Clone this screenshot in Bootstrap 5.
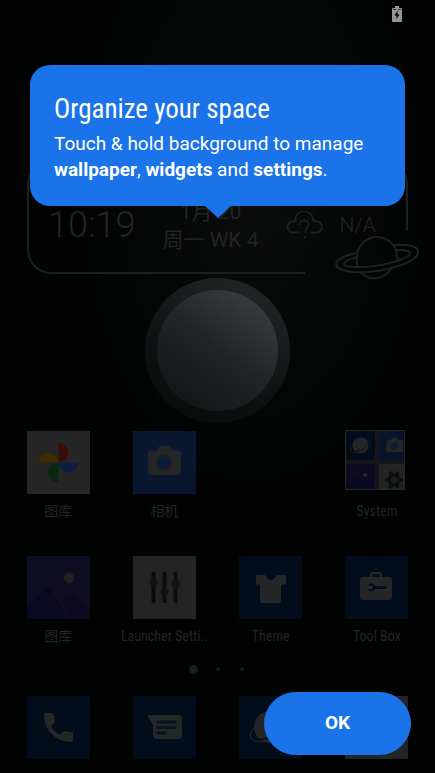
<!DOCTYPE html>
<html lang="en">
<head>
<meta charset="utf-8">
<meta name="viewport" content="width=device-width, initial-scale=1">
<title>Home</title>
<link href="https://cdn.jsdelivr.net/npm/bootstrap@5.3.0/dist/css/bootstrap.min.css" rel="stylesheet">
<style>
:root { --accent: #1a73e8; --dim: #242526; --navy: #020d1c; }
body { background: #010202; color: #232425; font-family: Roboto, "Noto Sans CJK SC", sans-serif; }
.home { min-height: 100vh; background: radial-gradient(ellipse 190px 330px at 58% 190px, #0b0d0d 0, #050606 55%, #010202 100%); overflow: hidden; }
.status { height: 28px; padding: 6px 33px 0 0; }
.clock-widget { margin: 132px 27px 0; height: 114px; padding: 41px 32px 0 21px; }
.clock-widget::before, .clock-widget::after { content: ""; position: absolute; top: 0; border: 2px solid #1e1f20; }
.clock-widget::before { left: 0; right: 103px; bottom: 0; border-width: 0 0 2px 2px; border-radius: 24px 0 0 24px; }
.clock-widget::after { right: 0; width: 30px; bottom: 44px; border-width: 2px 2px 0 0; border-top-right-radius: 24px; }
.time { font-size: 36px; font-weight: 300; line-height: 48px; }
.date { font-size: 21px; line-height: 28px; margin-top: -3px; }
.weather { font-size: 21px; font-weight: 300; line-height: 48px; }
.planet { right: -11px; bottom: -6px; }
.orb { width: 145px; height: 145px; padding: 12px; margin-top: 4px; background: linear-gradient(205deg, #242627 5%, #111213 55%, #090a0a 95%); }
.orb-core { background: linear-gradient(215deg, #373c40 12%, #202426 50%, #131617 90%); }
.apps { padding: 0 5px; }
.first-row { margin-top: 8px; }
.next-row { margin-top: 35px; }
.app { color: #232425; font-family: "Roboto Condensed", Roboto, "Noto Sans CJK SC", sans-serif; font-size: 14px; line-height: 20px; }
.app:hover { color: #333; }
.app svg { overflow: visible; }
.app-name { margin-top: 7px; white-space: nowrap; }
.pager { height: 10px; gap: 20px; margin: 18px 0 22px; }
.dot { width: 4px; height: 4px; background: #1c1d1d; }
.dot-on { width: 9px; height: 9px; margin: 0 -2px; }
.tip { top: 65px; left: 30px; right: 30px; padding: 28px 24px 23px; background: var(--accent); border-radius: 20px; }
.tip::after { content: ""; position: absolute; left: 50%; top: 100%; margin-left: -13px; border: 13px solid transparent; border-top: 12px solid var(--accent); border-bottom: 0; }
.tip h1 { font-family: "Roboto Condensed", Roboto, sans-serif; font-size: 27px; font-weight: 400; line-height: 32px; margin-bottom: 6px; }
.tip p { font-size: 19px; line-height: 26px; }
.ok { top: 692px; right: 24px; width: 147px; height: 63px; font-size: 19px; font-weight: 700; --bs-btn-bg: var(--accent); --bs-btn-border-color: var(--accent); }
</style>
</head>
<body>
<svg width="0" height="0" class="position-absolute" aria-hidden="true">
  <defs>
    <g id="planet-icon"><ellipse cx="31" cy="33" rx="21" ry="10" transform="rotate(-24 31 33)" fill="none" stroke="#202122" stroke-width="1.5"/><circle cx="31" cy="31" r="16" fill="#242526"/><path d="M14 42C25 47 43 37 48 25" fill="none" stroke="#020d1c" stroke-width="1.5"/></g>
    <g id="camera-icon"><path d="M18 20h5l4-5h9l4 5h5q3 0 3 3v18q0 3-3 3H18q-3 0-3-3V23q0-3 3-3z" fill="#252627"/><circle cx="31" cy="31.500" r="8.500" fill="#1d1f22"/><circle cx="31" cy="31.500" r="6" fill="#0b1b38"/></g>
  </defs>
</svg>
<div class="home position-relative">
  <div class="status d-flex justify-content-end">
    <svg width="10" height="16" viewBox="0 0 10 16" role="img" aria-label="Battery charging"><path d="M3 0h4v2h2q1 0 1 1v12q0 1-1 1H1q-1 0-1-1V3q0-1 1-1h2z" fill="#969696"/><path d="M1 3.500h3M6 3.500h3" stroke="#333"/><path d="M5.500 4.500L2.500 9.500H4.500V13L7.500 8.500H5.500z" fill="#000"/></svg>
  </div>

  <main>
    <section class="clock-widget position-relative d-flex justify-content-between align-items-start">
      <div class="time">10:19</div>
      <div class="date text-center">1月 20<br>周一 WK 4</div>
      <div class="weather d-flex align-items-center gap-3">
        <svg width="38" height="30" viewBox="0 0 40 32" fill="none" stroke="#202122" stroke-width="2" aria-hidden="true"><path d="M14 24H7a6 6 0 0 1 1-12h2C8 -2 29 -2 29 12h3a6 6 0 0 1 0 12h-6"/><path d="M14 16c0-7 11-6 10 0-1 4-4 3-4 8M20 28v2"/></svg>
        <span>N/A</span>
      </div>
      <svg class="planet position-absolute" width="84" height="44" viewBox="0 0 84 44" fill="none" stroke="#202122" stroke-width="2" aria-hidden="true"><path d="M22 21A20 20 0 0 1 62 21"/><path d="M22 17C-5 22-5 34 18 36C45 38 83 27 83 16C83 9 70 8 59 9"/><path d="M22 21C4 26 5 31 21 31C43 32 75 23 75 17C75 14 67 14 61 14"/><path d="M22 21Q21 26 23 31M62 21Q63 23 62 25M26 36C32 45 50 45 57 31"/></svg>
    </section>

    <div class="orb rounded-circle mx-auto"><div class="orb-core rounded-circle h-100"></div></div>

    <section class="apps first-row row g-0">
      <a class="app col-3 d-flex flex-column align-items-center text-decoration-none" href="#">
        <svg width="63" height="63" viewBox="0 0 63 63" aria-hidden="true"><path fill="#262626" d="M0 0h63v63H0z"/><path d="M31.500 11.500a10 10 0 0 1 0 20z" fill="#3b0d0a"/><path d="M51.500 31.500a10 10 0 0 1-20 0z" fill="#0c1f42"/><path d="M31.500 51.500a10 10 0 0 1 0-20z" fill="#062910"/><path d="M11.500 31.500a10 10 0 0 1 20 0z" fill="#3c2c02"/></svg>
        <span class="app-name">图库</span>
      </a>
      <a class="app col-3 d-flex flex-column align-items-center text-decoration-none" href="#">
        <svg width="63" height="63" viewBox="0 0 63 63" aria-hidden="true"><path fill="#091730" d="M0 0h63v63H0z"/><path d="M16 43L36 63H63V39L47 22z" fill="#08152d"/><use href="#camera-icon"/></svg>
        <span class="app-name">相机</span>
      </a>
      <a class="app col-3 offset-3 d-flex flex-column align-items-center text-decoration-none" href="#">
        <svg width="63" height="63" viewBox="-1 0 63 63" aria-hidden="true"><path d="M-.5-.5h59v59h-59z" fill="#141617" stroke="#252729"/><path d="M0 0h29v29H0z" fill="#020d1c"/><path d="M33 0h25v29H33z" fill="#08142b"/><path d="M0 33h29v25H0z" fill="#0e0b20"/><path d="M0 55l11-9 7 5 4-4 7 6v5H0z" fill="#0a0820"/><circle cx="19" cy="44" r="2" fill="#252525"/><path d="M33 33h25v25H33z" fill="#242424"/><use href="#planet-icon" transform="translate(-1 -1) scale(.5)"/><use href="#camera-icon" transform="translate(33 -1) scale(.5)"/><g transform="translate(48 49)"><circle r="6.500" fill="#0c0d0e"/><path d="M-4-8L4 8M4-8L-4 8M-9 0H9" stroke="#0c0d0e" stroke-width="4"/><circle r="3" fill="#222"/><circle r="2" fill="#0c1b32"/></g></svg>
        <span class="app-name">System</span>
      </a>
    </section>

    <section class="apps next-row row g-0">
      <a class="app col-3 d-flex flex-column align-items-center text-decoration-none" href="#">
        <svg width="63" height="63" viewBox="0 0 63 63" aria-hidden="true"><path fill="#0f0d21" d="M0 0h63v63H0z"/><path d="M0 50L23 30L42 63H0z" fill="#0b0920"/><path d="M23 30L47 53L53 63H41z" fill="#130e1e"/><path d="M34 43l9-6 20 14v12H42z" fill="#0d0a20"/><circle cx="42" cy="22" r="5" fill="#232224"/></svg>
        <span class="app-name">图库</span>
      </a>
      <a class="app col-3 d-flex flex-column align-items-center text-decoration-none" href="#">
        <svg width="63" height="63" viewBox="0 0 63 63" aria-hidden="true"><path fill="#242424" d="M0 0h63v63H0z"/><path d="M20.500 17.500v28M31.500 17.500v28M42.500 17.500v28" stroke="#0b0c0d" stroke-width="4" stroke-linecap="round"/><g fill="#101214"><circle cx="20.500" cy="26" r="4"/><circle cx="31.500" cy="36" r="4"/><circle cx="42.500" cy="28" r="4"/></g></svg>
        <span class="app-name">Launcher Setti..</span>
      </a>
      <a class="app col-3 d-flex flex-column align-items-center text-decoration-none" href="#">
        <svg width="63" height="63" viewBox="0 0 63 63" aria-hidden="true"><path fill="#020d1c" d="M0 0h63v63H0z"/><path d="M17 19h9q6 10 12 0h9v9l-5 1v15q0 3-3 3H24q-3 0-3-3V29l-4-1z" fill="#252627"/></svg>
        <span class="app-name">Theme</span>
      </a>
      <a class="app col-3 d-flex flex-column align-items-center text-decoration-none" href="#">
        <svg width="63" height="63" viewBox="0 0 63 63" aria-hidden="true"><path fill="#020d1c" d="M0 0h63v63H0z"/><path d="M26 22v-3q0-2 2-2h6q2 0 2 2v3" fill="none" stroke="#252627" stroke-width="2"/><rect x="15" y="21" width="32" height="23" rx="3" fill="#252627"/><path d="M29 31.500h11" stroke="#020d1c" stroke-width="3" stroke-linecap="round"/><path d="M24 29.500a3 3 0 1 1 0 4" fill="none" stroke="#020d1c" stroke-width="2"/></svg>
        <span class="app-name">Tool Box</span>
      </a>
    </section>

    <div class="pager d-flex justify-content-center align-items-center" aria-hidden="true">
      <span class="dot dot-on rounded-circle"></span><span class="dot rounded-circle"></span><span class="dot rounded-circle"></span>
    </div>

    <nav class="apps row g-0" aria-label="Dock">
      <a class="app col-3 text-center" href="#" aria-label="Phone"><svg width="63" height="63" viewBox="0 0 63 63"><path fill="#020d1c" d="M0 0h63v63H0z"/><path d="M19 17h6q2 0 2 2 0 3 1 6 0 1-1 2l-3 3q3 6 9 9l3-3q1-1 2-1 3 1 6 1 2 0 2 2v6q0 2-2 2C29 46 17 34 17 19q0-2 2-2z" fill="#252627"/></svg></a>
      <a class="app col-3 text-center" href="#" aria-label="Messages"><svg width="63" height="63" viewBox="0 0 63 63"><path fill="#020d1c" d="M0 0h63v63H0z"/><path d="M14 19h31q4 0 4 4v16q0 4-4 4H24q-4 0-4-4V29z" fill="#252627"/><path d="M25 26h17M25 31.500h17M25 37h7" stroke="#0a1322" stroke-width="3" stroke-linecap="round"/></svg></a>
      <a class="app col-3 text-center" href="#" aria-label="Browser"><svg width="63" height="63" viewBox="0 0 63 63"><path fill="#020d1c" d="M0 0h63v63H0z"/><use href="#planet-icon"/></svg></a>
      <a class="app col-3 text-center" href="#" aria-label="Apps"><svg width="63" height="63" viewBox="0 0 63 63"><path fill="#242424" d="M0 0h63v63H0z"/></svg></a>
    </nav>
  </main>

  <div class="tip position-absolute text-white" role="dialog" aria-labelledby="tip-title">
    <h1 id="tip-title">Organize your space</h1>
    <p class="mb-0">Touch &amp; hold background to manage <strong>wallpaper</strong>, <strong>widgets</strong> and <strong>settings</strong>.</p>
  </div>
  <button type="button" class="ok btn btn-primary rounded-pill position-absolute">OK</button>
</div>
<script src="https://cdn.jsdelivr.net/npm/bootstrap@5.3.0/dist/js/bootstrap.bundle.min.js"></script>
</body>
</html>
